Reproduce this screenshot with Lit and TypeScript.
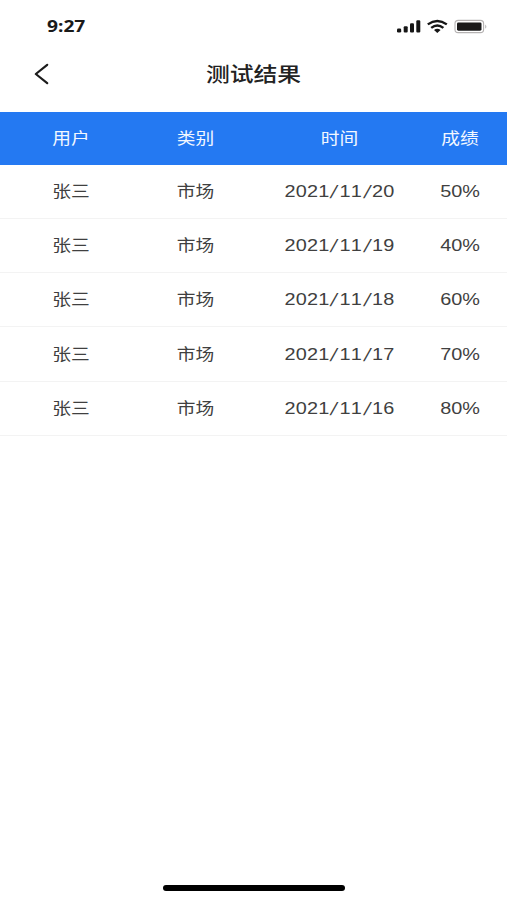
import { LitElement, html, css } from "lit";
import { customElement } from "lit/decorators.js";

const HEADERS = ["用户", "类别", "时间", "成绩"];

const ROWS = [
  ["张三", "市场", "2021/11/20", "50%"],
  ["张三", "市场", "2021/11/19", "40%"],
  ["张三", "市场", "2021/11/18", "60%"],
  ["张三", "市场", "2021/11/17", "70%"],
  ["张三", "市场", "2021/11/16", "80%"],
];

@customElement("status-bar")
class StatusBar extends LitElement {
  static styles = css`
    :host {
      display: flex;
      justify-content: space-between;
      align-items: center;
      height: 52px;
      padding: 0 19px 0 47px;
      box-sizing: border-box;
    }
    .time {
      font: 700 16px/20px "Noto Sans", sans-serif;
      color: #1a1a1a;
      transform: scaleX(1.2);
      transform-origin: left;
    }
    .icons {
      display: block;
    }
  `;
  render() {
    return html`
      <span class="time">9:27</span>
      <svg class="icons" width="92" height="18" viewBox="396 17 92 18">
        <g fill="#161616">
          <rect x="397" y="28.5" width="4.2" height="4" rx="1.3" />
          <rect x="403.7" y="26.2" width="4" height="6.3" rx="1.1" />
          <rect x="410" y="23.3" width="4" height="9.2" rx="1.1" />
          <rect x="416.3" y="20.3" width="4" height="12.2" rx="1.1" />
        </g>
        <g fill="none" stroke="#161616" stroke-width="2.4">
          <path d="M427.8 24.4 Q437.3 17.5 446.8 24.4" />
          <path d="M431.2 27.9 Q437.3 22.9 443.4 27.9" />
        </g>
        <path d="M434 30.1 Q437.3 27.3 440.6 30.1 L437.3 32.9 Z" fill="#161616" />
        <rect x="455" y="20.4" width="28.6" height="12.2" rx="3.2" fill="#fff" stroke="#b5b2b2" stroke-width="1.1" />
        <rect x="457" y="22.4" width="24.5" height="8.3" rx="1.4" fill="#1b1a1a" />
        <path d="M485.3 24.4 Q487.4 26.5 485.3 28.7 Z" fill="#aaa" />
      </svg>
    `;
  }
}

@customElement("nav-bar")
class NavBar extends LitElement {
  static styles = css`
    :host {
      display: grid;
      grid-template-columns: 80px 1fr 80px;
      align-items: center;
      height: 60px;
      padding-bottom: 16px;
      box-sizing: border-box;
    }
    .back {
      display: block;
      margin-left: 33px;
    }
    .title {
      text-align: center;
      font: 500 20px/30px "Noto Sans CJK SC", sans-serif;
      color: #222;
      transform: scaleX(1.19);
    }
  `;
  render() {
    return html`
      <svg class="back" width="18" height="24" viewBox="0 0 18 24">
        <path d="M14.2 2.8 L2.8 12 L14.2 21.2" fill="none" stroke="#1c1c1c" stroke-width="2.2" stroke-linecap="round" stroke-linejoin="round" />
      </svg>
      <div class="title">测试结果</div>
    `;
  }
}

@customElement("app-root")
class AppRoot extends LitElement {
  static styles = css`
    :host {
      display: flex;
      flex-direction: column;
      width: 507px;
      height: 900px;
      background: #fff;
      overflow: hidden;
    }
    .row {
      display: grid;
      grid-template-columns: 142px 107px 181px 60px;
      align-items: center;
      height: 54.2px;
      padding-top: 1.4px;
      box-sizing: border-box;
      border-bottom: 1px solid #f3f3f3;
      text-align: center;
      font: 400 16px/24px "Liberation Sans", "Noto Sans CJK SC", sans-serif;
      font-kerning: none;
      color: #404040;
    }
    .head {
      height: 52.8px;
      border-bottom: 0;
      background: #2479f2;
      color: #f2f7ff;
    }
    .cell {
      transform: scaleX(1.17);
      white-space: nowrap;
    }
    .num {
      transform: scaleX(1.24);
    }
    .date {
      letter-spacing: 0.2px;
    }
    .slash {
      display: inline-block;
      padding: 0 1.7px;
      transform: skewX(-12deg) scaleY(1.12);
    }
    .home {
      width: 182px;
      height: 6px;
      margin: auto auto 9px;
      border-radius: 3px;
      background: #000;
    }
  `;
  private date(text: string) {
    return text
      .split("/")
      .map((part, i) => (i ? html`<span class="slash">/</span>${part}` : part));
  }
  render() {
    return html`
      <status-bar></status-bar>
      <nav-bar></nav-bar>
      <div class="row head">${HEADERS.map((t) => html`<span class="cell">${t}</span>`)}</div>
      ${ROWS.map(
        ([user, kind, day, score]) => html`<div class="row">
          <span class="cell">${user}</span>
          <span class="cell">${kind}</span>
          <span class="cell num date">${this.date(day)}</span>
          <span class="cell num">${score}</span>
        </div>`
      )}
      <div class="home"></div>
    `;
  }
}
